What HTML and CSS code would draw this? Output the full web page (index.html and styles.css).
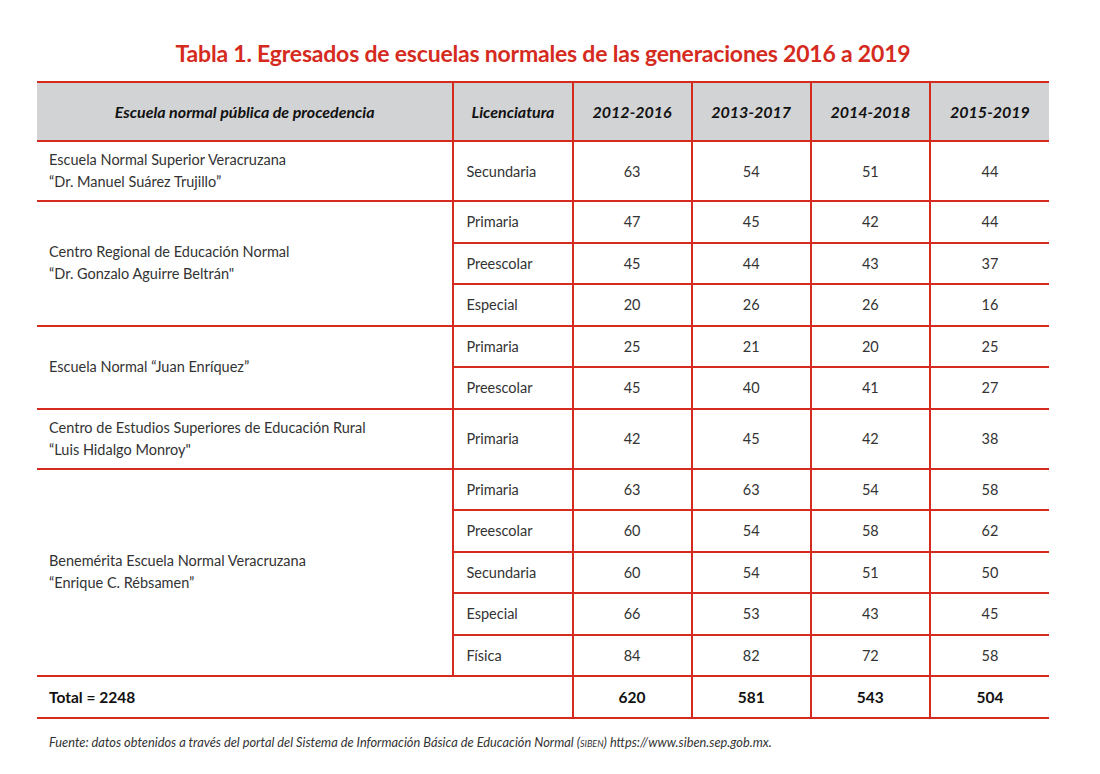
FILE: index.html
```html
<!DOCTYPE html>
<html lang="es">
<head>
<meta charset="utf-8">
<title>Tabla 1</title>
<link rel="stylesheet" href="styles.css">
</head>
<body>
<div class="page">
  <h1 class="title">Tabla 1. Egresados de escuelas normales de las generaciones 2016 a 2019</h1>
  <table class="data">
    <colgroup>
      <col class="c-school"><col class="c-lic"><col class="c-num"><col class="c-num"><col class="c-num"><col class="c-num">
    </colgroup>
    <thead>
      <tr class="r-head">
        <th>Escuela normal pública de procedencia</th>
        <th>Licenciatura</th>
        <th>2012-2016</th>
        <th>2013-2017</th>
        <th>2014-2018</th>
        <th>2015-2019</th>
      </tr>
    </thead>
    <tbody>
      <tr class="r-tall">
        <td class="school">Escuela Normal Superior Veracruzana<br>“Dr. Manuel Suárez Trujillo”</td>
        <td class="lic">Secundaria</td><td class="num">63</td><td class="num">54</td><td class="num">51</td><td class="num">44</td>
      </tr>
      <tr class="r-sub">
        <td class="school" rowspan="3">Centro Regional de Educación Normal<br>“Dr. Gonzalo Aguirre Beltrán"</td>
        <td class="lic">Primaria</td><td class="num">47</td><td class="num">45</td><td class="num">42</td><td class="num">44</td>
      </tr>
      <tr class="r-sub">
        <td class="lic">Preescolar</td><td class="num">45</td><td class="num">44</td><td class="num">43</td><td class="num">37</td>
      </tr>
      <tr class="r-sub">
        <td class="lic">Especial</td><td class="num">20</td><td class="num">26</td><td class="num">26</td><td class="num">16</td>
      </tr>
      <tr class="r-sub">
        <td class="school" rowspan="2">Escuela Normal “Juan Enríquez”</td>
        <td class="lic">Primaria</td><td class="num">25</td><td class="num">21</td><td class="num">20</td><td class="num">25</td>
      </tr>
      <tr class="r-sub">
        <td class="lic">Preescolar</td><td class="num">45</td><td class="num">40</td><td class="num">41</td><td class="num">27</td>
      </tr>
      <tr class="r-tall">
        <td class="school">Centro de Estudios Superiores de Educación Rural<br>“Luis Hidalgo Monroy"</td>
        <td class="lic">Primaria</td><td class="num">42</td><td class="num">45</td><td class="num">42</td><td class="num">38</td>
      </tr>
      <tr class="r-sub">
        <td class="school" rowspan="5">Benemérita Escuela Normal Veracruzana<br>“Enrique C. Rébsamen”</td>
        <td class="lic">Primaria</td><td class="num">63</td><td class="num">63</td><td class="num">54</td><td class="num">58</td>
      </tr>
      <tr class="r-sub">
        <td class="lic">Preescolar</td><td class="num">60</td><td class="num">54</td><td class="num">58</td><td class="num">62</td>
      </tr>
      <tr class="r-sub">
        <td class="lic">Secundaria</td><td class="num">60</td><td class="num">54</td><td class="num">51</td><td class="num">50</td>
      </tr>
      <tr class="r-sub">
        <td class="lic">Especial</td><td class="num">66</td><td class="num">53</td><td class="num">43</td><td class="num">45</td>
      </tr>
      <tr class="r-sub">
        <td class="lic">Física</td><td class="num">84</td><td class="num">82</td><td class="num">72</td><td class="num">58</td>
      </tr>
      <tr class="r-sub r-total">
        <td class="school" colspan="2">Total = 2248</td>
        <td class="num">620</td><td class="num">581</td><td class="num">543</td><td class="num">504</td>
      </tr>
    </tbody>
  </table>
  <p class="source">Fuente: datos obtenidos a través del portal del Sistema de Información Básica de Educación Normal (<span class="sc">siben</span>) https://www.siben.sep.gob.mx.</p>
</div>
</body>
</html>
```

FILE: styles.css
```css
html, body {
  margin: 0;
  padding: 0;
  background: #ffffff;
}

body {
  font-family: "Lato", "Open Sans", sans-serif;
  color: #333333;
}

.page {
  width: 1012px;
  margin-left: 37px;
  padding-top: 39px;
}

.title {
  margin: 0 0 14px 0;
  text-align: center;
  font-family: "Lato", sans-serif;
  font-weight: 700;
  font-size: 23px;
  line-height: 28px;
  color: #d52b1e;
  letter-spacing: -0.2px;
}

.data {
  width: 1012px;
  border-collapse: collapse;
  table-layout: fixed;
  font-size: 14.5px;
}

.c-school { width: 416px; }
.c-lic { width: 119px; }
.c-num { width: 119px; }

.data th,
.data td {
  border: 2px solid #d52b1e;
  padding: 0 12px;
  vertical-align: middle;
}

.data tr > :first-child { border-left: none; }
.data tr > :last-child { border-right: none; }

.data th {
  background: #d1d3d4;
  color: #111;
  font-style: italic;
  font-weight: 700;
  font-size: 16px;
  text-align: center;
  height: 57px;
  padding: 0;
}

.r-tall td { height: 58px; }
.r-sub td { height: 39.5px; }

.school {
  text-align: left;
  line-height: 22px;
}

.lic { text-align: left; }

.num { text-align: center; }

.r-total td {
  font-weight: 700;
  font-size: 15.5px;
  color: #111;
}

.source {
  margin: 15px 0 0 12px;
  font-size: 12.8px;
  font-style: italic;
  color: #333;
}

.sc {
  font-variant: small-caps;
}
```
